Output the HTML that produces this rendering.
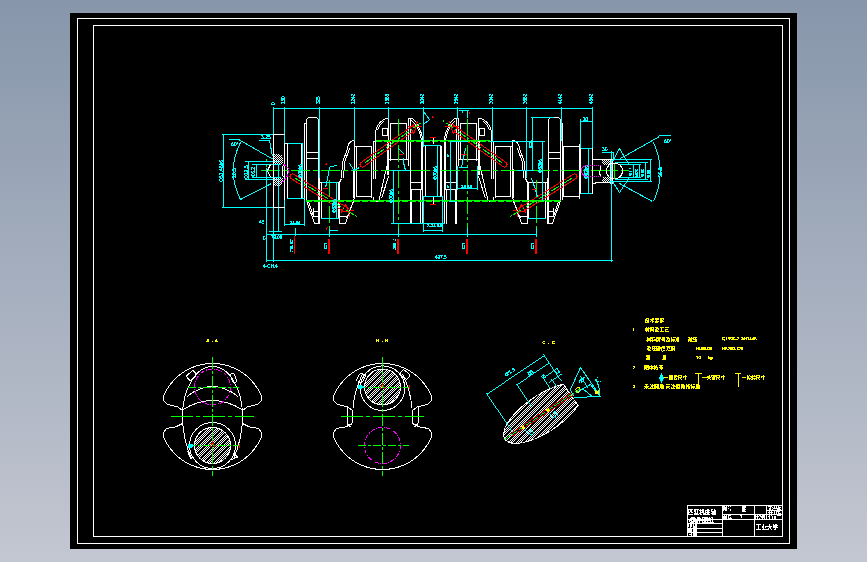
<!DOCTYPE html>
<html lang="zh"><head><meta charset="utf-8"><title>曲轴零件图</title>
<style>
html,body{margin:0;padding:0;width:867px;height:562px;overflow:hidden;background:#a4adbd}
#bg{position:absolute;left:0;top:0;width:867px;height:562px;background:linear-gradient(180deg,#8796ab 0%,#c3c7d1 100%)}
#sheet{position:absolute;left:70px;top:13px;width:727px;height:536px;background:#000}
svg{position:absolute;left:0;top:0;width:867px;height:562px}
svg text{font-family:"Liberation Sans","Noto Sans CJK SC",sans-serif;filter:url(#cr)}
</style></head><body>
<div id="bg"></div><div id="sheet"></div>
<svg width="867" height="562" viewBox="0 0 867 562" shape-rendering="crispEdges">
<defs><pattern id="hx" width="2" height="2" patternUnits="userSpaceOnUse"><rect x="0" y="0" width="1" height="1" fill="#fff"/><rect x="1" y="1" width="1" height="1" fill="#fff"/></pattern><pattern id="hl" width="2" height="2" patternUnits="userSpaceOnUse" patternTransform="rotate(0)"><rect x="0" y="0" width="1" height="1" fill="#fff"/><rect x="1" y="1" width="1" height="1" fill="#fff"/></pattern><filter id="cr" x="-20%" y="-20%" width="140%" height="140%" color-interpolation-filters="sRGB"><feComponentTransfer><feFuncA type="discrete" tableValues="0 0 0 1 1 1 1"/></feComponentTransfer></filter></defs>
<rect x="77.5" y="18.5" width="712" height="525" fill="none" stroke="#ffffff" stroke-width="1"/>
<rect x="93.5" y="25.5" width="689" height="511" fill="none" stroke="#ffffff" stroke-width="1"/>
<g id="half">
<line x1="287.5" y1="144" x2="287.5" y2="199" stroke="#ffffff" stroke-width="1" />
<line x1="304.5" y1="123" x2="304.5" y2="200" stroke="#ffffff" stroke-width="1" />
<line x1="304" y1="123.5" x2="307" y2="123.5" stroke="#ffffff" stroke-width="1" />
<path d="M306.5,200.5 V121 Q306.5,117.5 310,117.5 H315 Q318.5,117.5 318.5,121 V223.5" fill="none" stroke="#ffffff" stroke-width="1" />
<line x1="319.5" y1="178" x2="319.5" y2="224" stroke="#ffffff" stroke-width="1" />
<line x1="307" y1="152.5" x2="319" y2="152.5" stroke="#ffffff" stroke-width="1" />
<line x1="307" y1="158.5" x2="319" y2="158.5" stroke="#ffffff" stroke-width="1" />
<polyline points="306.5,200.5 314.5,223.5 319.5,223.5" fill="none" stroke="#ffffff" stroke-width="1" />
<polyline points="308.5,201.5 313.5,216.5 319.5,216.5" fill="none" stroke="#ffffff" stroke-width="1" />
<line x1="313" y1="211.5" x2="320" y2="211.5" stroke="#ffffff" stroke-width="1" />
<line x1="313.5" y1="208" x2="313.5" y2="217" stroke="#ffffff" stroke-width="1" />
<line x1="320" y1="182.5" x2="340" y2="182.5" stroke="#ffffff" stroke-width="1" />
<line x1="321.5" y1="183" x2="321.5" y2="219" stroke="#ffffff" stroke-width="1" />
<line x1="338.5" y1="183" x2="338.5" y2="219" stroke="#ffffff" stroke-width="1" />
<line x1="321" y1="218.5" x2="339" y2="218.5" stroke="#ffffff" stroke-width="1" />
<path d="M347.5,148.5 Q348,141 354.5,140.5" fill="none" stroke="#ffffff" stroke-width="1" />
<polyline points="347.5,148.5 342.5,162.5 341.5,178.5 339.5,182.5" fill="none" stroke="#ffffff" stroke-width="1" />
<polyline points="349.5,148.5 344.5,162.5 343.5,178.5" fill="none" stroke="#ffffff" stroke-width="1" />
<line x1="339.5" y1="182" x2="339.5" y2="224" stroke="#ffffff" stroke-width="1" />
<line x1="339" y1="223.5" x2="346" y2="223.5" stroke="#ffffff" stroke-width="1" />
<polyline points="345.5,223.5 352.5,203.5 354.5,197.5" fill="none" stroke="#ffffff" stroke-width="1" />
<polyline points="346.5,218.5 353.5,201.5" fill="none" stroke="#ffffff" stroke-width="1" />
<line x1="340" y1="216.5" x2="348" y2="216.5" stroke="#ffffff" stroke-width="1" />
<line x1="354.5" y1="141" x2="354.5" y2="198" stroke="#ffffff" stroke-width="1" />
<line x1="353.5" y1="169" x2="353.5" y2="198" stroke="#ffffff" stroke-width="1" />
<line x1="356.5" y1="146" x2="356.5" y2="197" stroke="#ffffff" stroke-width="1" />
<line x1="355" y1="146.5" x2="372" y2="146.5" stroke="#ffffff" stroke-width="1" />
<line x1="356" y1="196.5" x2="372" y2="196.5" stroke="#ffffff" stroke-width="1" />
<line x1="371.5" y1="146" x2="371.5" y2="198" stroke="#ffffff" stroke-width="1" />
<line x1="373.5" y1="141" x2="373.5" y2="179" stroke="#ffffff" stroke-width="1" />
<line x1="375.5" y1="131" x2="375.5" y2="179" stroke="#ffffff" stroke-width="1" />
<line x1="373" y1="141.5" x2="376" y2="141.5" stroke="#ffffff" stroke-width="1" />
<path d="M375.5,131.5 Q377,124 383,120 Q385,118.5 388.5,118.5" fill="none" stroke="#ffffff" stroke-width="1" />
<path d="M377.5,130.5 Q379,125 384,121" fill="none" stroke="#ffffff" stroke-width="1" />
<line x1="388.5" y1="118" x2="388.5" y2="175" stroke="#ffffff" stroke-width="1" />
<line x1="387.5" y1="140" x2="387.5" y2="175" stroke="#ffffff" stroke-width="1" />
<line x1="390.5" y1="124" x2="390.5" y2="161" stroke="#ffffff" stroke-width="1" />
<rect x="382.5" y="128.5" width="5" height="7" fill="none" stroke="#ffffff" stroke-width="1"/>
<polyline points="387.5,163.5 379.5,198.5" fill="none" stroke="#ffffff" stroke-width="1" />
<polyline points="388.5,176.5 381.5,198.5" fill="none" stroke="#ffffff" stroke-width="1" />
<path d="M373.5,197 Q373.5,201.5 376.5,201.5 Q379.5,201.5 380,198" fill="none" stroke="#ffffff" stroke-width="1" />
<line x1="390" y1="123.5" x2="407" y2="123.5" stroke="#ffffff" stroke-width="1" />
<line x1="389" y1="159.5" x2="409" y2="159.5" stroke="#ffffff" stroke-width="1" />
<line x1="406.5" y1="124" x2="406.5" y2="160" stroke="#ffffff" stroke-width="1" />
<line x1="408.5" y1="118" x2="408.5" y2="166" stroke="#ffffff" stroke-width="1" />
<line x1="408" y1="118.5" x2="413" y2="118.5" stroke="#ffffff" stroke-width="1" />
<line x1="410.5" y1="118" x2="410.5" y2="224" stroke="#ffffff" stroke-width="1" />
<path d="M412.5,118.5 Q417,122 420,130 Q422,134 422.5,138" fill="none" stroke="#ffffff" stroke-width="1" />
<path d="M411.5,120.5 Q416,124 419,131 Q420.5,135 420.5,138" fill="none" stroke="#ffffff" stroke-width="1" />
<line x1="422.5" y1="138" x2="422.5" y2="223" stroke="#ffffff" stroke-width="1" />
<line x1="421.5" y1="138" x2="421.5" y2="183" stroke="#ffffff" stroke-width="1" />
<path d="M411.5,182.5 H420.5 Q421.5,182.5 421.5,184 V188 Q421.5,189.5 420.5,189.5 H411.5 Q410.5,189.5 410.5,188 V184 Q410.5,182.5 411.5,182.5" fill="none" stroke="#ffffff" stroke-width="1" />
<line x1="411.5" y1="190" x2="411.5" y2="224" stroke="#ffffff" stroke-width="1" />
<line x1="420.5" y1="190" x2="420.5" y2="224" stroke="#ffffff" stroke-width="1" />
<line x1="425.5" y1="146" x2="425.5" y2="197" stroke="#ffffff" stroke-width="1" />
<g transform="translate(292.5,176.5) rotate(32)"><path d="M0,-2.5 H66 M0,2.5 H60 M0,-2.5 A2.5,2.5 0 0 0 0,2.5" fill="none" stroke="#f00" stroke-width="1"/><path d="M60,-4.5 L70,3.5 M60,4.5 L70,-3.5 M60,-4.5 V4.5" fill="none" stroke="#f00" stroke-width="1"/><path d="M3,0 H76" fill="none" stroke="#0f0" stroke-width="1" stroke-dasharray="9 2 2 2"/></g>
<g transform="translate(362.5,164.5) rotate(-35.5)"><path d="M0,-2.5 H66 M0,2.5 H60 M0,2.5 A2.5,2.5 0 0 1 0,-2.5" fill="none" stroke="#f00" stroke-width="1"/><path d="M60,-4.5 L70,3.5 M60,4.5 L70,-3.5 M60,-4.5 V4.5" fill="none" stroke="#f00" stroke-width="1"/><path d="M3,0 H76" fill="none" stroke="#0f0" stroke-width="1" stroke-dasharray="9 2 2 2"/></g>
</g>
<use href="#half" transform="translate(867,0) scale(-1,1)"/>
<line x1="261" y1="170.5" x2="629" y2="170.5" stroke="#00ff00" stroke-width="1" stroke-dasharray="19 3 5 3"/>
<line x1="376" y1="140.5" x2="490" y2="140.5" stroke="#00ff00" stroke-width="1" />
<line x1="376" y1="141.5" x2="490" y2="141.5" stroke="#00ff00" stroke-width="1" stroke-dasharray="6 2"/>
<line x1="306" y1="200.5" x2="561" y2="200.5" stroke="#00ff00" stroke-width="1" />
<line x1="306" y1="201.5" x2="561" y2="201.5" stroke="#00ff00" stroke-width="1" stroke-dasharray="6 2"/>
<line x1="329.5" y1="180" x2="329.5" y2="229" stroke="#00ff00" stroke-width="1" stroke-dasharray="17 3 3 3"/>
<line x1="329.5" y1="228" x2="329.5" y2="237" stroke="#00ffff" stroke-width="1" />
<line x1="398.5" y1="119" x2="398.5" y2="229" stroke="#00ff00" stroke-width="1" stroke-dasharray="17 3 3 3"/>
<line x1="398.5" y1="228" x2="398.5" y2="237" stroke="#00ffff" stroke-width="1" />
<line x1="467.5" y1="119" x2="467.5" y2="229" stroke="#00ff00" stroke-width="1" stroke-dasharray="17 3 3 3"/>
<line x1="467.5" y1="228" x2="467.5" y2="237" stroke="#00ffff" stroke-width="1" />
<line x1="536.5" y1="180" x2="536.5" y2="229" stroke="#00ff00" stroke-width="1" stroke-dasharray="17 3 3 3"/>
<line x1="536.5" y1="228" x2="536.5" y2="237" stroke="#00ffff" stroke-width="1" />
<line x1="266.5" y1="159" x2="266.5" y2="168" stroke="#00ff00" stroke-width="1" stroke-dasharray="3 2"/>
<line x1="614.5" y1="163" x2="614.5" y2="179" stroke="#00ff00" stroke-width="1" />
<line x1="273" y1="108.5" x2="593" y2="108.5" stroke="#00ffff" stroke-width="1" />
<line x1="273.5" y1="107" x2="273.5" y2="135" stroke="#00ffff" stroke-width="1" />
<line x1="284.5" y1="107" x2="284.5" y2="144" stroke="#00ffff" stroke-width="1" />
<line x1="319.5" y1="107" x2="319.5" y2="178" stroke="#00ffff" stroke-width="1" />
<line x1="354.5" y1="107" x2="354.5" y2="141" stroke="#00ffff" stroke-width="1" />
<line x1="388.5" y1="107" x2="388.5" y2="119" stroke="#00ffff" stroke-width="1" />
<line x1="423.5" y1="107" x2="423.5" y2="147" stroke="#00ffff" stroke-width="1" />
<line x1="457.5" y1="107" x2="457.5" y2="119" stroke="#00ffff" stroke-width="1" />
<line x1="492.5" y1="107" x2="492.5" y2="141" stroke="#00ffff" stroke-width="1" />
<line x1="526.5" y1="107" x2="526.5" y2="178" stroke="#00ffff" stroke-width="1" />
<line x1="561.5" y1="107" x2="561.5" y2="141" stroke="#00ffff" stroke-width="1" />
<line x1="592.5" y1="107" x2="592.5" y2="149" stroke="#00ffff" stroke-width="1" />
<text x="275" y="105" fill="#00ffff" font-size="4.6" text-anchor="start" transform="rotate(-90 275 105)" stroke="#00ffff" stroke-width="0.15" >0</text>
<text x="285" y="104" fill="#00ffff" font-size="4.6" text-anchor="start" transform="rotate(-90 285 104)" stroke="#00ffff" stroke-width="0.15" >150</text>
<text x="320" y="104" fill="#00ffff" font-size="4.6" text-anchor="start" transform="rotate(-90 320 104)" stroke="#00ffff" stroke-width="0.15" >325</text>
<text x="355" y="104" fill="#00ffff" font-size="4.6" text-anchor="start" transform="rotate(-90 355 104)" stroke="#00ffff" stroke-width="0.15" >1242</text>
<text x="389" y="104" fill="#00ffff" font-size="4.6" text-anchor="start" transform="rotate(-90 389 104)" stroke="#00ffff" stroke-width="0.15" >1665</text>
<text x="424" y="104" fill="#00ffff" font-size="4.6" text-anchor="start" transform="rotate(-90 424 104)" stroke="#00ffff" stroke-width="0.15" >2042</text>
<text x="458" y="104" fill="#00ffff" font-size="4.6" text-anchor="start" transform="rotate(-90 458 104)" stroke="#00ffff" stroke-width="0.15" >2642</text>
<text x="493" y="104" fill="#00ffff" font-size="4.6" text-anchor="start" transform="rotate(-90 493 104)" stroke="#00ffff" stroke-width="0.15" >3042</text>
<text x="527" y="104" fill="#00ffff" font-size="4.6" text-anchor="start" transform="rotate(-90 527 104)" stroke="#00ffff" stroke-width="0.15" >3662</text>
<text x="562" y="104" fill="#00ffff" font-size="4.6" text-anchor="start" transform="rotate(-90 562 104)" stroke="#00ffff" stroke-width="0.15" >4142</text>
<text x="593" y="104" fill="#00ffff" font-size="4.6" text-anchor="start" transform="rotate(-90 593 104)" stroke="#00ffff" stroke-width="0.15" >4542</text>
<line x1="222" y1="134.5" x2="274" y2="134.5" stroke="#00ffff" stroke-width="1" />
<line x1="222" y1="207.5" x2="274" y2="207.5" stroke="#00ffff" stroke-width="1" />
<line x1="223.5" y1="134" x2="223.5" y2="208" stroke="#00ffff" stroke-width="1" />
<text x="223" y="182" fill="#00ffff" font-size="5" text-anchor="start" transform="rotate(-90 223 182)" stroke="#00ffff" stroke-width="0.15" >Φ51.46h6</text>
<line x1="229" y1="139.5" x2="239" y2="139.5" stroke="#00ffff" stroke-width="1" />
<text x="231" y="146" fill="#00ffff" font-size="5" text-anchor="start" stroke="#00ffff" stroke-width="0.15" >60°</text>
<line x1="238.5" y1="139.5" x2="273.5" y2="159.5" stroke="#00ffff" stroke-width="1" />
<line x1="240.5" y1="199.5" x2="271.5" y2="183.5" stroke="#00ffff" stroke-width="1" />
<path d="M240.5,142.5 Q226,171 240.5,199.5" fill="none" stroke="#00ffff" stroke-width="1" />
<text x="236" y="178" fill="#00ffff" font-size="5" text-anchor="start" transform="rotate(-90 236 178)" stroke="#00ffff" stroke-width="0.15" >20.5</text>
<text x="261" y="139" fill="#00ffff" font-size="5" text-anchor="start" stroke="#00ffff" stroke-width="0.15" >3.25</text>
<line x1="259" y1="140.5" x2="270" y2="140.5" stroke="#00ffff" stroke-width="1" />
<line x1="269.5" y1="140.5" x2="272.5" y2="156.5" stroke="#00ffff" stroke-width="1" />
<line x1="245" y1="161.5" x2="279" y2="161.5" stroke="#00ffff" stroke-width="1" />
<line x1="245" y1="179.5" x2="279" y2="179.5" stroke="#00ffff" stroke-width="1" />
<line x1="248.5" y1="161" x2="248.5" y2="180" stroke="#00ffff" stroke-width="1" />
<line x1="252" y1="164.5" x2="281" y2="164.5" stroke="#00ffff" stroke-width="1" />
<line x1="252" y1="177.5" x2="281" y2="177.5" stroke="#00ffff" stroke-width="1" />
<line x1="256.5" y1="164" x2="256.5" y2="178" stroke="#00ffff" stroke-width="1" />
<text x="248" y="179" fill="#00ffff" font-size="5" text-anchor="start" transform="rotate(-90 248 179)" stroke="#00ffff" stroke-width="0.15" >Φ12.5</text>
<text x="255" y="177" fill="#00ffff" font-size="4.5" text-anchor="start" transform="rotate(-90 255 177)" stroke="#00ffff" stroke-width="0.15" >Φ6.3</text>
<line x1="266.5" y1="168" x2="266.5" y2="262" stroke="#00ffff" stroke-width="1" />
<line x1="273.5" y1="207" x2="273.5" y2="262" stroke="#00ffff" stroke-width="1" />
<line x1="278.5" y1="165" x2="278.5" y2="232" stroke="#00ffff" stroke-width="1" />
<line x1="269" y1="231.5" x2="282" y2="231.5" stroke="#00ffff" stroke-width="1" />
<line x1="266" y1="234.5" x2="537" y2="234.5" stroke="#00ffff" stroke-width="1" />
<text x="259" y="224" fill="#00ffff" font-size="5" text-anchor="start" stroke="#00ffff" stroke-width="0.15" >45</text>
<text x="263" y="240" fill="#00ffff" font-size="4.5" text-anchor="start" stroke="#00ffff" stroke-width="0.15" >0</text>
<text x="271" y="239" fill="#00ffff" font-size="4.5" text-anchor="start" stroke="#00ffff" stroke-width="0.15" >79.00</text>
<line x1="284.5" y1="199" x2="284.5" y2="226" stroke="#00ffff" stroke-width="1" />
<line x1="284" y1="224.5" x2="305" y2="224.5" stroke="#00ffff" stroke-width="1" />
<line x1="304.5" y1="200" x2="304.5" y2="226" stroke="#00ffff" stroke-width="1" />
<text x="290" y="224" fill="#00ffff" font-size="4" text-anchor="start" stroke="#00ffff" stroke-width="0.15" >34.84</text>
<line x1="301.5" y1="144" x2="301.5" y2="199" stroke="#ffffff" stroke-width="1" />
<line x1="563.5" y1="146" x2="563.5" y2="197" stroke="#ffffff" stroke-width="1" />
<line x1="563" y1="146.5" x2="580" y2="146.5" stroke="#ffffff" stroke-width="1" />
<line x1="562" y1="196.5" x2="580" y2="196.5" stroke="#ffffff" stroke-width="1" />
<line x1="287" y1="143.5" x2="303" y2="143.5" stroke="#00ffff" stroke-width="1" />
<line x1="302.5" y1="143" x2="302.5" y2="198" stroke="#00ffff" stroke-width="1" />
<line x1="287" y1="198.5" x2="305" y2="198.5" stroke="#00ffff" stroke-width="1" />
<text x="302" y="178" fill="#00ffff" font-size="4.6" text-anchor="start" transform="rotate(-90 302 178)" stroke="#00ffff" stroke-width="0.15" >Φ70h6</text>
<line x1="273" y1="134.5" x2="285" y2="134.5" stroke="#ffffff" stroke-width="1" />
<line x1="273" y1="207.5" x2="285" y2="207.5" stroke="#ffffff" stroke-width="1" />
<line x1="273.5" y1="134" x2="273.5" y2="208" stroke="#ffffff" stroke-width="1" />
<line x1="284.5" y1="144" x2="284.5" y2="200" stroke="#ffffff" stroke-width="1" />
<line x1="284" y1="143.5" x2="288" y2="143.5" stroke="#ffffff" stroke-width="1" />
<path d="M274,154 H279 Q283,155 283,160 V164 H274 Z" fill="url(#hx)" stroke="#ffffff" stroke-width="0" />
<path d="M274,178 H282.5 V182 Q282,186 278,186 H274 Z" fill="url(#hx)" stroke="#ffffff" stroke-width="0" />
<path d="M283.5,164.5 Q289,167 288.5,171 Q288,178 281.5,182.5" fill="none" stroke="#ff00ff" stroke-width="1" stroke-dasharray="3 1"/>
<polyline points="270.5,164.5 267.5,170.5 270.5,177.5" fill="none" stroke="#ffffff" stroke-width="1" />
<path d="M283.5,165 Q280.5,171 283.5,177" fill="none" stroke="#ffffff" stroke-width="1" />
<line x1="266" y1="260.5" x2="613" y2="260.5" stroke="#00ffff" stroke-width="1" />
<line x1="611.5" y1="151" x2="611.5" y2="262" stroke="#00ffff" stroke-width="1" />
<text x="263" y="268" fill="#00ffff" font-size="4.6" text-anchor="start" stroke="#00ffff" stroke-width="0.15" >4-CH.4</text>
<text x="435" y="259" fill="#00ffff" font-size="4.6" text-anchor="start" stroke="#00ffff" stroke-width="0.15" >497.5</text>
<line x1="294.5" y1="236" x2="294.5" y2="254" stroke="#ff0000" stroke-width="1" />
<text x="293.5" y="253" fill="#00ffff" font-size="4.6" text-anchor="start" transform="rotate(-90 293.5 253)" stroke="#00ffff" stroke-width="0.15" >158.82</text>
<line x1="329" y1="239" x2="329" y2="254" stroke="#ff0000" stroke-width="2" />
<text x="327.5" y="250" fill="#00ffff" font-size="4.6" text-anchor="start" transform="rotate(-90 327.5 250)" stroke="#00ffff" stroke-width="0.15" >325</text>
<line x1="398" y1="239" x2="398" y2="254" stroke="#ff0000" stroke-width="2" />
<text x="396.5" y="250" fill="#00ffff" font-size="4.6" text-anchor="start" transform="rotate(-90 396.5 250)" stroke="#00ffff" stroke-width="0.15" >280.2</text>
<line x1="467" y1="239" x2="467" y2="254" stroke="#ff0000" stroke-width="2" />
<text x="465.5" y="250" fill="#00ffff" font-size="4.6" text-anchor="start" transform="rotate(-90 465.5 250)" stroke="#00ffff" stroke-width="0.15" >325</text>
<line x1="536" y1="239" x2="536" y2="254" stroke="#ff0000" stroke-width="2" />
<text x="534.5" y="250" fill="#00ffff" font-size="4.6" text-anchor="start" transform="rotate(-90 534.5 250)" stroke="#00ffff" stroke-width="0.15" >325</text>
<line x1="295.5" y1="228" x2="295.5" y2="236" stroke="#00ffff" stroke-width="1" />
<line x1="322" y1="182.5" x2="338" y2="182.5" stroke="#00ffff" stroke-width="1" />
<line x1="321" y1="218.5" x2="339" y2="218.5" stroke="#00ffff" stroke-width="1" />
<line x1="528" y1="218.5" x2="546" y2="218.5" stroke="#00ffff" stroke-width="1" />
<line x1="336.5" y1="183" x2="336.5" y2="219" stroke="#00ffff" stroke-width="1" />
<text x="336" y="213" fill="#00ffff" font-size="4.6" text-anchor="start" transform="rotate(-90 336 213)" stroke="#00ffff" stroke-width="0.15" >Φ58h6</text>
<polyline points="337.5,165.5 330.5,166.5 329.5,167.5 328.5,173.5 326.5,183.5 325.5,187.5" fill="none" stroke="#00ffff" stroke-width="1" />
<line x1="323" y1="188.5" x2="328" y2="188.5" stroke="#ff0000" stroke-width="1" />
<line x1="325.5" y1="165.5" x2="326.5" y2="163.5" stroke="#ff0000" stroke-width="1" />
<line x1="325.5" y1="230.5" x2="327.5" y2="227.5" stroke="#ff0000" stroke-width="1" />
<line x1="330" y1="230.5" x2="338" y2="230.5" stroke="#00ffff" stroke-width="1" />
<line x1="349.5" y1="163.5" x2="353.5" y2="169.5" stroke="#00ffff" stroke-width="1" />
<line x1="359.5" y1="167.5" x2="353.5" y2="170.5" stroke="#00ffff" stroke-width="1" />
<line x1="353.5" y1="169.5" x2="354.5" y2="171.5" stroke="#00ffff" stroke-width="1" />
<polyline points="398.5,148.5 404.5,154.5" fill="none" stroke="#00ffff" stroke-width="1" />
<line x1="399" y1="154.5" x2="403" y2="154.5" stroke="#ff0000" stroke-width="1" />
<polyline points="403.5,157.5 403.5,162.5 405.5,170.5" fill="none" stroke="#00ffff" stroke-width="1" />
<line x1="391" y1="170.5" x2="410" y2="170.5" stroke="#00ffff" stroke-width="1" />
<line x1="393.5" y1="170" x2="393.5" y2="224" stroke="#00ffff" stroke-width="1" />
<line x1="391" y1="223.5" x2="445" y2="223.5" stroke="#00ffff" stroke-width="1" />
<text x="393" y="203" fill="#00ffff" font-size="4.6" text-anchor="start" transform="rotate(-90 393 203)" stroke="#00ffff" stroke-width="0.15" >Φ70h6</text>
<line x1="424" y1="145.5" x2="441" y2="145.5" stroke="#00ffff" stroke-width="1" />
<line x1="437.5" y1="146" x2="437.5" y2="197" stroke="#00ffff" stroke-width="1" />
<text x="437" y="180" fill="#00ffff" font-size="4.6" text-anchor="start" transform="rotate(-90 437 180)" stroke="#00ffff" stroke-width="0.15" >Φ70h6</text>
<line x1="423" y1="196.5" x2="443" y2="196.5" stroke="#00ffff" stroke-width="1" />
<line x1="423.5" y1="196" x2="423.5" y2="232" stroke="#00ffff" stroke-width="1" />
<line x1="442.5" y1="196" x2="442.5" y2="232" stroke="#00ffff" stroke-width="1" />
<line x1="423" y1="230.5" x2="443" y2="230.5" stroke="#00ffff" stroke-width="1" />
<text x="427" y="227" fill="#00ffff" font-size="4.4" text-anchor="start" stroke="#00ffff" stroke-width="0.15" >2-34.84</text>
<line x1="430" y1="137.5" x2="436" y2="137.5" stroke="#ff0000" stroke-width="1" />
<line x1="433.5" y1="138" x2="433.5" y2="144" stroke="#ffffff" stroke-width="1" />
<line x1="430" y1="204.5" x2="436" y2="204.5" stroke="#ff0000" stroke-width="1" />
<line x1="433.5" y1="197" x2="433.5" y2="204" stroke="#ffffff" stroke-width="1" />
<line x1="440.5" y1="146" x2="440.5" y2="197" stroke="#ffffff" stroke-width="1" />
<polyline points="423.5,111.5 429.5,119.5 423.5,124.5" fill="none" stroke="#00ffff" stroke-width="1" />
<line x1="432.5" y1="116.5" x2="433.5" y2="118.5" stroke="#ff0000" stroke-width="1" />
<line x1="459" y1="110.5" x2="469" y2="110.5" stroke="#00ffff" stroke-width="1" />
<line x1="467.5" y1="110" x2="467.5" y2="118" stroke="#00ffff" stroke-width="1" />
<line x1="462.5" y1="110" x2="462.5" y2="113" stroke="#00ffff" stroke-width="1" />
<text x="469" y="114" fill="#ff0000" font-size="4" text-anchor="start" stroke="#ff0000" stroke-width="0.15" >r</text>
<line x1="450.5" y1="141" x2="450.5" y2="202" stroke="#00ffff" stroke-width="1" />
<line x1="449" y1="201.5" x2="457" y2="201.5" stroke="#00ffff" stroke-width="1" />
<line x1="450" y1="141.5" x2="468" y2="141.5" stroke="#00ffff" stroke-width="1" />
<text x="447" y="157" fill="#00ffff" font-size="5" text-anchor="start" stroke="#00ffff" stroke-width="0.15" >▸</text>
<text x="447" y="188" fill="#00ffff" font-size="5" text-anchor="start" stroke="#00ffff" stroke-width="0.15" >▸</text>
<line x1="457.5" y1="166" x2="457.5" y2="190" stroke="#00ffff" stroke-width="1" />
<line x1="477.5" y1="166" x2="477.5" y2="190" stroke="#00ffff" stroke-width="1" />
<line x1="457" y1="188.5" x2="478" y2="188.5" stroke="#00ffff" stroke-width="1" />
<text x="461" y="188" fill="#00ffff" font-size="4.4" text-anchor="start" stroke="#00ffff" stroke-width="0.15" >34.84</text>
<polyline points="465.5,148.5 461.5,167.5" fill="none" stroke="#00ffff" stroke-width="1" />
<line x1="459" y1="167.5" x2="468" y2="167.5" stroke="#00ffff" stroke-width="1" />
<line x1="461" y1="154.5" x2="467" y2="154.5" stroke="#ff0000" stroke-width="1" />
<line x1="490" y1="141.5" x2="545" y2="141.5" stroke="#00ffff" stroke-width="1" />
<line x1="517" y1="170.5" x2="534" y2="170.5" stroke="#00ffff" stroke-width="1" />
<line x1="532.5" y1="118" x2="532.5" y2="171" stroke="#00ffff" stroke-width="1" />
<line x1="531" y1="117.5" x2="554" y2="117.5" stroke="#00ffff" stroke-width="1" />
<line x1="542.5" y1="141" x2="542.5" y2="201" stroke="#00ffff" stroke-width="1" />
<text x="542" y="173" fill="#00ffff" font-size="4.6" text-anchor="start" transform="rotate(-90 542 173)" stroke="#00ffff" stroke-width="0.15" >Φ58h6</text>
<text x="532.5" y="148" fill="#00ffff" font-size="4.6" text-anchor="start" transform="rotate(-90 532.5 148)" stroke="#00ffff" stroke-width="0.15" >R20</text>
<polyline points="531.5,178.5 535.5,189.5 537.5,197.5" fill="none" stroke="#00ffff" stroke-width="1" />
<line x1="532" y1="189.5" x2="536" y2="189.5" stroke="#ff0000" stroke-width="1" />
<line x1="442.5" y1="223" x2="442.5" y2="232" stroke="#00ffff" stroke-width="1" />
<line x1="580.5" y1="119" x2="580.5" y2="194" stroke="#00ffff" stroke-width="1" />
<line x1="580" y1="121.5" x2="593" y2="121.5" stroke="#00ffff" stroke-width="1" />
<text x="583" y="120.5" fill="#00ffff" font-size="4.6" text-anchor="start" stroke="#00ffff" stroke-width="0.15" >20</text>
<line x1="580" y1="148.5" x2="593" y2="148.5" stroke="#00ffff" stroke-width="1" />
<line x1="580" y1="193.5" x2="593" y2="193.5" stroke="#00ffff" stroke-width="1" />
<line x1="588.5" y1="148" x2="588.5" y2="194" stroke="#00ffff" stroke-width="1" />
<text x="588" y="179" fill="#00ffff" font-size="4.6" text-anchor="start" transform="rotate(-90 588 179)" stroke="#00ffff" stroke-width="0.15" >Φ82h6</text>
<line x1="580.5" y1="148" x2="580.5" y2="194" stroke="#ffffff" stroke-width="1" />
<line x1="592.5" y1="148" x2="592.5" y2="194" stroke="#ffffff" stroke-width="1" />
<line x1="592" y1="159.5" x2="614" y2="159.5" stroke="#ffffff" stroke-width="1" />
<line x1="595" y1="182.5" x2="611" y2="182.5" stroke="#ffffff" stroke-width="1" />
<line x1="592" y1="183.5" x2="596" y2="183.5" stroke="#ffffff" stroke-width="1" />
<line x1="610.5" y1="159" x2="610.5" y2="184" stroke="#ffffff" stroke-width="1" />
<line x1="612.5" y1="159" x2="612.5" y2="184" stroke="#ffffff" stroke-width="1" />
<path d="M602,160 H611 V165 H603 Q601.5,162 602,160 Z" fill="url(#hx)" stroke="#ffffff" stroke-width="0" />
<path d="M603,177 H611 V182 H602.5 Q601.5,180 603,177 Z" fill="url(#hx)" stroke="#ffffff" stroke-width="0" />
<line x1="588" y1="165.5" x2="601" y2="165.5" stroke="#ff00ff" stroke-width="1" stroke-dasharray="1 1"/>
<line x1="588" y1="176.5" x2="601" y2="176.5" stroke="#ff00ff" stroke-width="1" stroke-dasharray="1 1"/>
<path d="M587.5,165.5 Q581,166 581.5,171 Q582,176 587.5,176.5" fill="none" stroke="#ff00ff" stroke-width="1" />
<polyline points="600.5,165.5 600.5,169.5 599.5,172.5 600.5,176.5" fill="none" stroke="#ffffff" stroke-width="1" />
<path d="M607.5,167 Q605.5,171 607.5,175" fill="none" stroke="#ffffff" stroke-width="1" />
<circle cx="614.5" cy="171" r="8" fill="none" stroke="#ffffff" stroke-width="1" />
<text x="602" y="151" fill="#00ffff" font-size="5" text-anchor="start" stroke="#00ffff" stroke-width="0.15" >30</text>
<line x1="602" y1="152.5" x2="614" y2="152.5" stroke="#00ffff" stroke-width="1" />
<line x1="613.5" y1="152" x2="613.5" y2="159" stroke="#00ffff" stroke-width="1" />
<polyline points="612.5,161.5 619.5,148.5 629.5,165.5" fill="none" stroke="#00ffff" stroke-width="1" />
<polyline points="612.5,181.5 619.5,192.5 629.5,177.5" fill="none" stroke="#00ffff" stroke-width="1" />
<line x1="620.5" y1="158.5" x2="659.5" y2="136.5" stroke="#00ffff" stroke-width="1" />
<line x1="659" y1="135.5" x2="671" y2="135.5" stroke="#00ffff" stroke-width="1" />
<text x="664" y="142.5" fill="#00ffff" font-size="5" text-anchor="start" stroke="#00ffff" stroke-width="0.15" >60°</text>
<line x1="619.5" y1="183.5" x2="652.5" y2="201.5" stroke="#00ffff" stroke-width="1" />
<path d="M653.5,142.5 Q667,172 653.5,201.5" fill="none" stroke="#00ffff" stroke-width="1" />
<text x="662" y="177" fill="#00ffff" font-size="5" text-anchor="start" transform="rotate(-90 662 177)" stroke="#00ffff" stroke-width="0.15" >20.5</text>
<line x1="613" y1="159.5" x2="652" y2="159.5" stroke="#00ffff" stroke-width="1" />
<line x1="609" y1="181.5" x2="652" y2="181.5" stroke="#00ffff" stroke-width="1" />
<line x1="650.5" y1="159" x2="650.5" y2="182" stroke="#00ffff" stroke-width="1" />
<line x1="615" y1="162.5" x2="648" y2="162.5" stroke="#00ffff" stroke-width="1" />
<line x1="615" y1="179.5" x2="648" y2="179.5" stroke="#00ffff" stroke-width="1" />
<line x1="645.5" y1="162" x2="645.5" y2="180" stroke="#00ffff" stroke-width="1" />
<line x1="639.5" y1="164" x2="639.5" y2="178" stroke="#00ffff" stroke-width="1" />
<line x1="633.5" y1="165" x2="633.5" y2="177" stroke="#00ffff" stroke-width="1" />
<line x1="620" y1="164.5" x2="641" y2="164.5" stroke="#00ffff" stroke-width="1" />
<line x1="620" y1="177.5" x2="641" y2="177.5" stroke="#00ffff" stroke-width="1" />
<text x="650" y="178" fill="#00ffff" font-size="4.4" text-anchor="start" transform="rotate(-90 650 178)" stroke="#00ffff" stroke-width="0.15" >Φ38</text>
<text x="644" y="177" fill="#00ffff" font-size="4.4" text-anchor="start" transform="rotate(-90 644 177)" stroke="#00ffff" stroke-width="0.15" >Φ30</text>
<text x="638" y="177" fill="#00ffff" font-size="4.4" text-anchor="start" transform="rotate(-90 638 177)" stroke="#00ffff" stroke-width="0.15" >M20</text>
<text x="632" y="176" fill="#00ffff" font-size="4.4" text-anchor="start" transform="rotate(-90 632 176)" stroke="#00ffff" stroke-width="0.15" >Φ17</text>
<g transform="translate(212.5,0)">
<path d="M30,410.5 L34.5,407 L45,404.5 L49,400.5 L49.6,397.9 L48.4,395.0 L47.0,392.1 L45.5,389.3 L43.7,386.6 L41.8,384.0 L39.8,381.5 L37.6,379.1 L35.3,376.9 L32.8,374.9 L30.2,373.0 L27.5,371.2 L24.7,369.6 L21.8,368.2 L18.9,367.0 L15.8,365.9 L12.7,365.1 L9.6,364.4 L6.4,363.9 L3.2,363.6 L0.0,363.5 L-3.2,363.6 L-6.4,363.9 L-9.6,364.4 L-12.7,365.1 L-15.8,365.9 L-18.9,367.0 L-21.8,368.2 L-24.7,369.6 L-27.5,371.2 L-30.2,373.0 L-32.8,374.9 L-35.3,376.9 L-37.6,379.1 L-39.8,381.5 L-41.8,384.0 L-43.7,386.6 L-45.5,389.3 L-47.0,392.1 L-48.4,395.0 L-49.6,397.9 L-49,400.5 L-45,404.5 L-34.5,407 L-30,410.5" fill="none" stroke="#ffffff" stroke-width="1" />
<path d="M30,423.5 L37,427 L46,428.5 L49,432.5 L49.6,435.1 L48.4,438.0 L47.0,440.9 L45.5,443.7 L43.7,446.4 L41.8,449.0 L39.8,451.5 L37.6,453.9 L35.3,456.1 L32.8,458.1 L30.2,460.0 L27.5,461.8 L24.7,463.4 L21.8,464.8 L18.9,466.0 L15.8,467.1 L12.7,467.9 L9.6,468.6 L6.4,469.1 L3.2,469.4 L0.0,469.5 L-3.2,469.4 L-6.4,469.1 L-9.6,468.6 L-12.7,467.9 L-15.8,467.1 L-18.9,466.0 L-21.8,464.8 L-24.7,463.4 L-27.5,461.8 L-30.2,460.0 L-32.8,458.1 L-35.3,456.1 L-37.6,453.9 L-39.8,451.5 L-41.8,449.0 L-43.7,446.4 L-45.5,443.7 L-47.0,440.9 L-48.4,438.0 L-49.6,435.1 L-49,432.5 L-46,428.5 L-37,427 L-30,423.5" fill="none" stroke="#ffffff" stroke-width="1" />
<path d="M-21,459 Q-30,438 -30,416.5 A30,50 0 0 1 30,416.5 Q30,438 21,459" fill="none" stroke="#ffffff" stroke-width="1" />
<path d="M-25.5,396.5 Q0,376.5 25.5,396.5" fill="none" stroke="#ffffff" stroke-width="1" />
<path d="M-29.5,409.5 Q0,391.5 29.5,409.5" fill="none" stroke="#ffffff" stroke-width="1" />
<circle cx="0" cy="445.5" r="23" fill="none" stroke="#ffffff" stroke-width="1" />
<rect x="-3" y="-4.5" width="6" height="9" rx="1.5" transform="translate(-21,375.5) rotate(50)" fill="none" stroke="#fff"/>
<rect x="-2" y="-4.5" width="4" height="9" rx="1" transform="translate(21,378) rotate(-20)" fill="none" stroke="#fff"/>
<path d="M-25,451 L-22,458 L-19,457 M18,460 L25,457 L21,453" fill="none" stroke="#ffffff" stroke-width="1" />
</g>
<clipPath id="cl212"><circle cx="212.5" cy="445.5" r="17.6"/></clipPath>
<circle cx="212.5" cy="445.5" r="18" fill="url(#hx)" stroke="#fff"/>
<g clip-path="url(#cl212)" stroke="#000" stroke-width="1.1"><line x1="151.5" y1="475.5" x2="211.5" y2="415.5"/><line x1="159.5" y1="475.5" x2="219.5" y2="415.5"/><line x1="167.5" y1="475.5" x2="227.5" y2="415.5"/><line x1="175.5" y1="475.5" x2="235.5" y2="415.5"/><line x1="183.5" y1="475.5" x2="243.5" y2="415.5"/><line x1="191.5" y1="475.5" x2="251.5" y2="415.5"/><line x1="199.5" y1="475.5" x2="259.5" y2="415.5"/><line x1="207.5" y1="475.5" x2="267.5" y2="415.5"/><line x1="215.5" y1="475.5" x2="275.5" y2="415.5"/></g>
<g transform="translate(212.5,0)">
<circle cx="0" cy="387" r="18" fill="none" stroke="#f0f" stroke-dasharray="4 1.5 1 1.5"/>
<line x1="0" y1="357" x2="0" y2="476" stroke="#0f0" stroke-dasharray="12 2 3 2"/>
<line x1="-42" y1="416.5" x2="41" y2="416.5" stroke="#0f0" stroke-dasharray="22 3 4 3"/>
<line x1="-25" y1="387" x2="26" y2="387" stroke="#0f0" stroke-dasharray="8 2 3 2"/>
<line x1="-25" y1="445.5" x2="26" y2="445.5" stroke="#0f0" stroke-dasharray="8 2 3 2"/>
<path d="M-24,444.0 h3 l2,1.5 l-2,1.5 h-3 z" fill="#0ff" stroke="#0ff"/>
<path d="M26.5,443.5 v4 M-2.5,447.0 L0,442.5 L2.5,447.0" fill="none" stroke="#f00"/>
</g>
<text x="212.5" y="342" fill="#ffff00" font-size="4" text-anchor="middle" stroke="#ffff00" stroke-width="0.15" letter-spacing="0.7">A - A</text>
<g transform="translate(382.5,0)">
<path d="M30,410.5 L34.5,407 L45,404.5 L49,400.5 L49.6,397.9 L48.4,395.0 L47.0,392.1 L45.5,389.3 L43.7,386.6 L41.8,384.0 L39.8,381.5 L37.6,379.1 L35.3,376.9 L32.8,374.9 L30.2,373.0 L27.5,371.2 L24.7,369.6 L21.8,368.2 L18.9,367.0 L15.8,365.9 L12.7,365.1 L9.6,364.4 L6.4,363.9 L3.2,363.6 L0.0,363.5 L-3.2,363.6 L-6.4,363.9 L-9.6,364.4 L-12.7,365.1 L-15.8,365.9 L-18.9,367.0 L-21.8,368.2 L-24.7,369.6 L-27.5,371.2 L-30.2,373.0 L-32.8,374.9 L-35.3,376.9 L-37.6,379.1 L-39.8,381.5 L-41.8,384.0 L-43.7,386.6 L-45.5,389.3 L-47.0,392.1 L-48.4,395.0 L-49.6,397.9 L-49,400.5 L-45,404.5 L-34.5,407 L-30,410.5" fill="none" stroke="#ffffff" stroke-width="1" />
<path d="M30,423.5 L37,427 L46,428.5 L49,432.5 L49.6,435.1 L48.4,438.0 L47.0,440.9 L45.5,443.7 L43.7,446.4 L41.8,449.0 L39.8,451.5 L37.6,453.9 L35.3,456.1 L32.8,458.1 L30.2,460.0 L27.5,461.8 L24.7,463.4 L21.8,464.8 L18.9,466.0 L15.8,467.1 L12.7,467.9 L9.6,468.6 L6.4,469.1 L3.2,469.4 L0.0,469.5 L-3.2,469.4 L-6.4,469.1 L-9.6,468.6 L-12.7,467.9 L-15.8,467.1 L-18.9,466.0 L-21.8,464.8 L-24.7,463.4 L-27.5,461.8 L-30.2,460.0 L-32.8,458.1 L-35.3,456.1 L-37.6,453.9 L-39.8,451.5 L-41.8,449.0 L-43.7,446.4 L-45.5,443.7 L-47.0,440.9 L-48.4,438.0 L-49.6,435.1 L-49,432.5 L-46,428.5 L-37,427 L-30,423.5" fill="none" stroke="#ffffff" stroke-width="1" />
<path d="M-30,410.5 Q-31,417 -30,423.5 M30,410.5 Q31,417 30,423.5" fill="none" stroke="#ffffff" stroke-width="1" />
<path d="M-35.5,407 V423 Q-34,426 -32,427 M35.5,407 V423 Q34,426 32,427" fill="none" stroke="#ffffff" stroke-width="1" />
<path d="M-29.5,408 Q-28,390 -20,374 M29.5,408 Q28,390 20,374" fill="none" stroke="#ffffff" stroke-width="1" />
<circle cx="0" cy="388.2" r="22.3" fill="none" stroke="#ffffff" stroke-width="1" />
<rect x="-3" y="-4.5" width="6" height="9" rx="1.5" transform="translate(-21.5,378) rotate(28)" fill="none" stroke="#fff"/>
<rect x="-3" y="-4.5" width="6" height="9" rx="1" transform="translate(22.5,374.5) rotate(-50)" fill="none" stroke="#fff"/>
</g>
<clipPath id="cl382"><circle cx="382.5" cy="387" r="17.6"/></clipPath>
<circle cx="382.5" cy="387" r="18" fill="url(#hx)" stroke="#fff"/>
<g clip-path="url(#cl382)" stroke="#000" stroke-width="1.1"><line x1="322.0" y1="417" x2="382.0" y2="357"/><line x1="330.0" y1="417" x2="390.0" y2="357"/><line x1="338.0" y1="417" x2="398.0" y2="357"/><line x1="346.0" y1="417" x2="406.0" y2="357"/><line x1="354.0" y1="417" x2="414.0" y2="357"/><line x1="362.0" y1="417" x2="422.0" y2="357"/><line x1="370.0" y1="417" x2="430.0" y2="357"/><line x1="378.0" y1="417" x2="438.0" y2="357"/><line x1="386.0" y1="417" x2="446.0" y2="357"/></g>
<g transform="translate(382.5,0)">
<circle cx="0" cy="445.5" r="18" fill="none" stroke="#f0f" stroke-dasharray="4 1.5 1 1.5"/>
<line x1="0" y1="357" x2="0" y2="476" stroke="#0f0" stroke-dasharray="12 2 3 2"/>
<line x1="-42" y1="416.5" x2="41" y2="416.5" stroke="#0f0" stroke-dasharray="22 3 4 3"/>
<line x1="-25" y1="387" x2="26" y2="387" stroke="#0f0" stroke-dasharray="8 2 3 2"/>
<line x1="-25" y1="445.5" x2="26" y2="445.5" stroke="#0f0" stroke-dasharray="8 2 3 2"/>
<path d="M-24,385.5 h3 l2,1.5 l-2,1.5 h-3 z" fill="#0ff" stroke="#0ff"/>
<path d="M26.5,385 v4 M-2.5,388.5 L0,384 L2.5,388.5" fill="none" stroke="#f00"/>
</g>
<text x="382.5" y="342" fill="#ffff00" font-size="4" text-anchor="middle" stroke="#ffff00" stroke-width="0.15" letter-spacing="0.7">B - B</text>
<text x="549" y="343.5" fill="#ffff00" font-size="4" text-anchor="middle" stroke="#ffff00" stroke-width="0.15" letter-spacing="0.7">C - C</text>
<clipPath id="cc"><path d="M578.0,405.6 L576.3,407.9 L574.5,410.3 L572.4,412.6 L570.2,415.0 L567.8,417.4 L565.3,419.7 L562.6,422.0 L559.8,424.2 L556.9,426.4 L553.9,428.5 L550.9,430.5 L547.8,432.4 L544.7,434.1 L541.6,435.8 L538.4,437.3 L535.4,438.6 L532.3,439.8 L529.4,440.9 L526.5,441.7 L523.7,442.4 L521.1,442.9 L518.5,443.3 L516.2,443.4 L514.0,443.3 L512.0,443.1 L510.2,442.7 L508.6,442.1 L507.2,441.3 L506.0,440.4 L505.1,439.2 L504.4,438.0 L504.0,436.5 L503.8,434.9 L503.8,433.2 L504.1,431.4 L504.6,429.4 L505.4,427.4 L506.4,425.3 L507.6,423.1 L509.1,420.8 L510.8,418.5 L512.7,416.1 L514.7,413.8 L517.0,411.4 L519.4,409.0 L522.0,406.7 L524.7,404.4 L527.5,402.2 L530.4,400.0 L533.4,398.0 L536.4,396.0 L539.5,394.1 L542.6,392.4 L545.8,390.7 L548.9,389.3 L552.0,387.9 L555.0,386.8 L557.9,385.8 L560.8,384.9 L563.6,384.3 Z"/></clipPath>
<path d="M578.0,405.6 L576.3,407.9 L574.5,410.3 L572.4,412.6 L570.2,415.0 L567.8,417.4 L565.3,419.7 L562.6,422.0 L559.8,424.2 L556.9,426.4 L553.9,428.5 L550.9,430.5 L547.8,432.4 L544.7,434.1 L541.6,435.8 L538.4,437.3 L535.4,438.6 L532.3,439.8 L529.4,440.9 L526.5,441.7 L523.7,442.4 L521.1,442.9 L518.5,443.3 L516.2,443.4 L514.0,443.3 L512.0,443.1 L510.2,442.7 L508.6,442.1 L507.2,441.3 L506.0,440.4 L505.1,439.2 L504.4,438.0 L504.0,436.5 L503.8,434.9 L503.8,433.2 L504.1,431.4 L504.6,429.4 L505.4,427.4 L506.4,425.3 L507.6,423.1 L509.1,420.8 L510.8,418.5 L512.7,416.1 L514.7,413.8 L517.0,411.4 L519.4,409.0 L522.0,406.7 L524.7,404.4 L527.5,402.2 L530.4,400.0 L533.4,398.0 L536.4,396.0 L539.5,394.1 L542.6,392.4 L545.8,390.7 L548.9,389.3 L552.0,387.9 L555.0,386.8 L557.9,385.8 L560.8,384.9 L563.6,384.3 Z" fill="url(#hx)" stroke="#fff"/>
<g clip-path="url(#cc)" stroke="#000" stroke-width="1.1"><line x1="521" y1="380" x2="451" y2="450"/><line x1="529" y1="380" x2="459" y2="450"/><line x1="537" y1="380" x2="467" y2="450"/><line x1="545" y1="380" x2="475" y2="450"/><line x1="553" y1="380" x2="483" y2="450"/><line x1="561" y1="380" x2="491" y2="450"/><line x1="569" y1="380" x2="499" y2="450"/><line x1="577" y1="380" x2="507" y2="450"/><line x1="585" y1="380" x2="515" y2="450"/><line x1="593" y1="380" x2="523" y2="450"/><line x1="601" y1="380" x2="531" y2="450"/><line x1="609" y1="380" x2="539" y2="450"/><line x1="617" y1="380" x2="547" y2="450"/><line x1="625" y1="380" x2="555" y2="450"/><line x1="512.7" y1="434.1" x2="573.2" y2="393.3" stroke-width="3"/></g>
<g transform="translate(543.4,413.4) rotate(-34)">
<path d="M-37,-1.5 H36 M-37,1.5 H36 M-37,-1.5 A1.5,1.5 0 0 0 -37,1.5" fill="none" stroke="#f00" stroke-width="1"/>
<line x1="-47" y1="0" x2="44" y2="0" stroke="#0f0" stroke-width="1" stroke-dasharray="7 1.5"/>
<rect x="-26" y="-1.5" width="3" height="3" fill="#ff0"/><rect x="4" y="-1.5" width="3" height="3" fill="#ff0"/><rect x="40" y="-2" width="4" height="4" fill="none" stroke="#ff0"/>
<g fill="none" stroke="#0ff">
<path d="M-36,-2 V-49 M33,-17 V-49 M-36,-47.5 H33"/>
<path d="M-6,-13 V-40 M-6,-38.5 H33"/>
<path d="M19.5,-16 V-31 M19.5,-29.5 H37 M26,-14 V-24 M22,-22.5 H38"/>
<path d="M-24,3 V10 M5,3 V10"/>
</g>
</g>
<polyline points="573.5,396.5 570.5,389.5 580.5,367.5 600.5,396.5 574.5,397.5" fill="none" stroke="#00ffff" stroke-width="1" />
<path d="M595.5,379.5 Q600,386 599.5,395" fill="none" stroke="#00ffff" stroke-width="1" />
<polyline points="576.5,392.5 590.5,384.5 596.5,392.5" fill="none" stroke="#00ffff" stroke-width="1" />
<polyline points="580.5,376.5 588.5,388.5" fill="none" stroke="#00ffff" stroke-width="1" />
<polyline points="583.5,389.5 592.5,396.5" fill="none" stroke="#00ffff" stroke-width="1" />
<text x="506" y="377" fill="#00ffff" stroke="#00ffff" stroke-width="0.15" font-size="5.4" transform="rotate(-34 506 377)">Φ5.5</text>
<text x="529" y="376" fill="#00ffff" stroke="#00ffff" stroke-width="0.15" font-size="5.4" transform="rotate(-34 529 376)">85</text>
<text x="542" y="380" fill="#00ffff" stroke="#00ffff" stroke-width="0.15" font-size="5" transform="rotate(-34 542 380)">35</text>
<text x="556" y="375" fill="#00ffff" stroke="#00ffff" stroke-width="0.15" font-size="5" transform="rotate(-34 556 375)">12</text>
<text x="528" y="431" fill="#00ffff" stroke="#00ffff" stroke-width="0.15" font-size="5" transform="rotate(56 528 431)">R2</text>
<text x="552" y="413" fill="#00ffff" stroke="#00ffff" stroke-width="0.15" font-size="5" transform="rotate(56 552 413)">R2</text>
<text x="580" y="384" fill="#00ffff" stroke="#00ffff" stroke-width="0.15" font-size="5.4" transform="rotate(-34 580 384)">60°</text>
<text x="594" y="378" fill="#00ffff" stroke="#00ffff" stroke-width="0.15" font-size="5" transform="rotate(56 594 378)">3.2</text>
<text x="595" y="394" fill="#ffff00" stroke="#ffff00" stroke-width="0.15" font-size="5" transform="rotate(0 595 394)">M</text>
<text x="645" y="321.6" fill="#ffff00" stroke="#ffff00" stroke-width="0.1" font-size="4.8">技术要求</text>
<text x="632.5" y="331.1" fill="#ffff00" stroke="#ffff00" stroke-width="0.1" font-size="4.4">1</text>
<text x="645" y="331.1" fill="#ffff00" stroke="#ffff00" stroke-width="0.1" font-size="4.8">材料及工艺</text>
<text x="646.5" y="340.6" fill="#ffff00" stroke="#ffff00" stroke-width="0.1" font-size="4.8">材料牌号及标准</text>
<text x="688" y="340.6" fill="#ffff00" stroke="#ffff00" stroke-width="0.1" font-size="4.8">球铁</text>
<text x="722" y="340.1" fill="#ffff00" stroke="#ffff00" stroke-width="0.1" font-size="4.4">QT900-2 GB1348</text>
<text x="646.5" y="350.1" fill="#ffff00" stroke="#ffff00" stroke-width="0.1" font-size="4.8">毛坯硬度范围</text>
<text x="696" y="350.1" fill="#ffff00" stroke="#ffff00" stroke-width="0.1" font-size="3.2">HB280-320</text>
<text x="722" y="350.1" fill="#ffff00" stroke="#ffff00" stroke-width="0.1" font-size="4.2">HB280-320</text>
<text x="646" y="359.1" fill="#ffff00" stroke="#ffff00" stroke-width="0.1" font-size="4.8">重</text>
<text x="662" y="359.1" fill="#ffff00" stroke="#ffff00" stroke-width="0.1" font-size="4.8">量</text>
<text x="696" y="359.1" fill="#ffff00" stroke="#ffff00" stroke-width="0.1" font-size="4.4">10</text>
<text x="708" y="359.1" fill="#ffff00" stroke="#ffff00" stroke-width="0.1" font-size="4.4">kg</text>
<text x="633" y="369.1" fill="#ffff00" stroke="#ffff00" stroke-width="0.1" font-size="4.4">2</text>
<text x="644" y="369.1" fill="#ffff00" stroke="#ffff00" stroke-width="0.1" font-size="4.8">图中符号</text>
<path d="M661.5,372.5 L664,378 L661.5,383.5 L659,378 Z" fill="#0ff" stroke="#0ff" stroke-width="0.15"/>
<text x="664" y="378.6" fill="#ffff00" stroke="#ffff00" stroke-width="0.1" font-size="4.6">—重要尺寸</text>
<path d="M695,373.5 H702 M698.5,373.5 V387 M735,373.5 H741 M738.5,373.5 V386.5" fill="none" stroke="#ff0"/>
<text x="702" y="378.6" fill="#ffff00" stroke="#ffff00" stroke-width="0.1" font-size="4.6">—关键尺寸</text>
<text x="742" y="378.6" fill="#ffff00" stroke="#ffff00" stroke-width="0.1" font-size="4.6">—检验尺寸</text>
<text x="633" y="388.1" fill="#ffff00" stroke="#ffff00" stroke-width="0.1" font-size="4.4">3</text>
<text x="644" y="388.1" fill="#ffff00" stroke="#ffff00" stroke-width="0.1" font-size="5">未注圆角 未注倒角按标准</text>
<line x1="687" y1="505.5" x2="783" y2="505.5" stroke="#ffffff" stroke-width="1" />
<line x1="687" y1="519.5" x2="783" y2="519.5" stroke="#ffffff" stroke-width="1" />
<line x1="687.5" y1="505" x2="687.5" y2="537" stroke="#ffffff" stroke-width="1" />
<line x1="722.5" y1="505" x2="722.5" y2="537" stroke="#ffffff" stroke-width="1" />
<line x1="754.5" y1="505" x2="754.5" y2="537" stroke="#ffffff" stroke-width="1" />
<line x1="766.5" y1="505" x2="766.5" y2="520" stroke="#ffffff" stroke-width="1" />
<line x1="722" y1="514.5" x2="783" y2="514.5" stroke="#ffffff" stroke-width="1" />
<line x1="766" y1="510.5" x2="783" y2="510.5" stroke="#ffffff" stroke-width="1" />
<line x1="728.5" y1="514" x2="728.5" y2="520" stroke="#ffffff" stroke-width="1" />
<line x1="687" y1="523.5" x2="723" y2="523.5" stroke="#ffffff" stroke-width="1" />
<line x1="687" y1="528.5" x2="723" y2="528.5" stroke="#ffffff" stroke-width="1" />
<line x1="687" y1="532.5" x2="723" y2="532.5" stroke="#ffffff" stroke-width="1" />
<line x1="696.5" y1="519" x2="696.5" y2="537" stroke="#ffffff" stroke-width="1" />
<text x="688" y="514" fill="#fff" stroke="#fff" stroke-width="0.1" font-size="5.7">四缸机曲轴</text>
<text x="690" y="521.5" fill="#fff" stroke="#fff" stroke-width="0.1" font-size="6">零件图纸</text>
<text x="723" y="510" fill="#fff" stroke="#fff" stroke-width="0.1" font-size="4.2">图号</text>
<text x="723" y="518.5" fill="#fff" stroke="#fff" stroke-width="0.1" font-size="4.4">材料</text>
<text x="741.5" y="511" fill="#fff" stroke="#fff" stroke-width="0.1" font-size="5.2">图</text>
<text x="754.7" y="518.8" fill="#fff" stroke="#fff" stroke-width="0.1" font-size="5.4">比例</text>
<text x="768" y="509" fill="#fff" stroke="#fff" stroke-width="0.1" font-size="5">第1张</text>
<text x="768" y="514.5" fill="#fff" stroke="#fff" stroke-width="0.1" font-size="5">共1张</text>
<text x="768" y="518.6" fill="#fff" stroke="#fff" stroke-width="0.1" font-size="4.2">1:10</text>
<text x="740" y="518" fill="#fff" stroke="#fff" stroke-width="0.1" font-size="4">1</text>
<text x="688" y="523" fill="#fff" stroke="#fff" stroke-width="0.1" font-size="4.4">设计</text>
<text x="688" y="527.3" fill="#fff" stroke="#fff" stroke-width="0.1" font-size="4.4">审核</text>
<text x="688" y="531.7" fill="#fff" stroke="#fff" stroke-width="0.1" font-size="4.4">批准</text>
<text x="688" y="535.8" fill="#fff" stroke="#fff" stroke-width="0.1" font-size="4.4">日期</text>
<text x="755.8" y="529" fill="#fff" stroke="#fff" stroke-width="0.1" font-size="5.6">工业大学</text>
</svg>
</body></html>
